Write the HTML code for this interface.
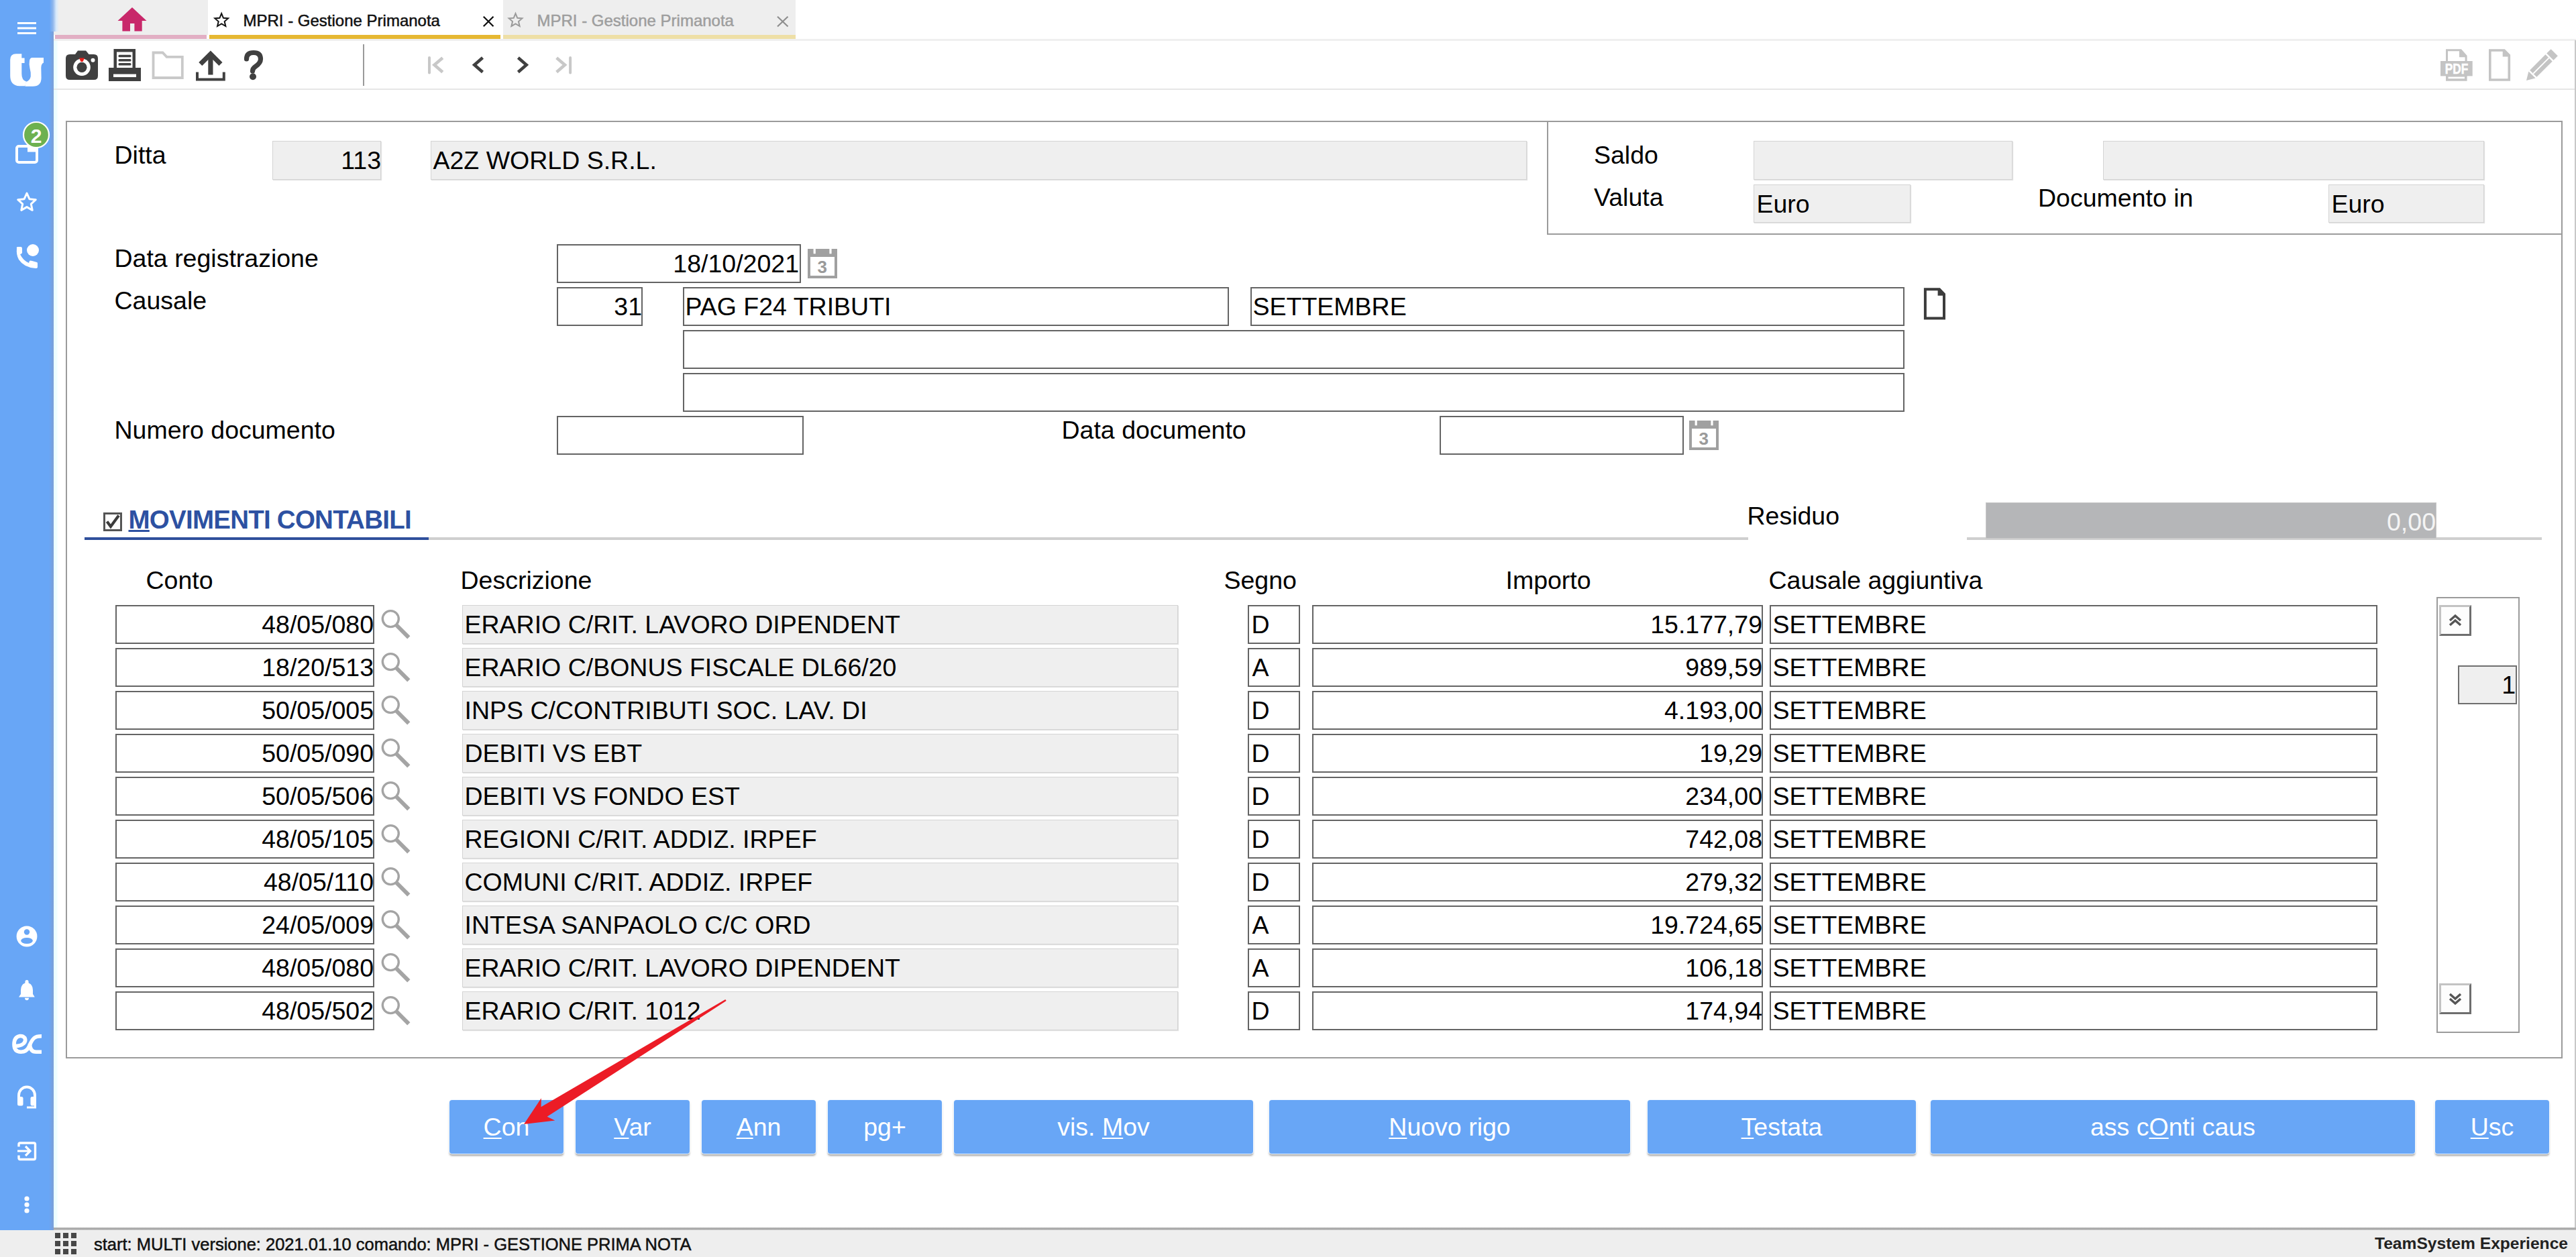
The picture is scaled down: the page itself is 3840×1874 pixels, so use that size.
<!DOCTYPE html>
<html><head><meta charset="utf-8"><style>
html,body{margin:0;padding:0;background:#fff;width:3840px;height:1874px;overflow:hidden;position:relative;font-family:"Liberation Sans",sans-serif;}
.t{position:absolute;white-space:nowrap;}
.b{position:absolute;box-sizing:border-box;}
.btn{position:absolute;top:1640px;height:80px;background:#68a6f6;border-radius:4px;box-shadow:0 0 0 1px #f2f9ff,0 3px 3px rgba(0,0,0,.38);color:#fff;font-size:37.5px;line-height:80px;text-align:center;box-sizing:border-box;}
.btn u{text-decoration-thickness:2px;text-underline-offset:2.5px;}
svg{display:block}
</style></head><body>
<div class="b" style="left:0px;top:0px;width:80px;height:1834px;background:#68a6f6;"></div>
<div class="b" style="left:73px;top:0px;width:7px;height:1834px;background:linear-gradient(90deg,#68a6f6,#7c9fd6);"></div>
<div class="b" style="left:80px;top:61px;width:7px;height:1769px;background:linear-gradient(90deg,#e8fdff,#effdff 60%,#fff);"></div>
<div class="b" style="left:80px;top:0px;width:230px;height:52px;background:#eeeeee;"></div>
<div class="b" style="left:82px;top:52px;width:226px;height:6px;background:#e2afc4;"></div>
<div class="b" style="left:312px;top:52px;width:434px;height:6px;background:#e6b832;"></div>
<div class="b" style="left:750px;top:0px;width:436px;height:52px;background:#eeeeee;"></div>
<div class="b" style="left:750px;top:52px;width:436px;height:6px;background:#eedfa6;"></div>
<div class="b" style="left:80px;top:58px;width:3760px;height:3px;background:#efefef;"></div>
<div class="b" style="left:74px;top:0px;width:14px;height:47px;background:linear-gradient(90deg,#68a6f6,#8fb6ec 35%,#d8eafc 70%,rgba(238,238,238,0));"></div>
<div class="b" style="left:80px;top:132px;width:3758px;height:2px;background:#e6e6e6;"></div>
<div class="b" style="left:541px;top:66px;width:2px;height:62px;background:#9a9a9a;"></div>
<div class="b" style="left:3838px;top:60px;width:2px;height:1770px;background:#c8c8c8;"></div>
<div class="b" style="left:0px;top:1834px;width:3840px;height:40px;background:#eeeeee;"></div>
<div class="b" style="left:80px;top:1830px;width:3760px;height:4px;background:linear-gradient(#b8b8b8,#a4a4a4 60%,#d8d8d8);"></div>
<div class="b" style="left:98px;top:180px;width:3722px;height:1398px;border:2px solid #9b9b9b;"></div>
<div class="b" style="left:2306px;top:181px;width:1513px;height:169px;border-left:2px solid #9b9b9b;border-bottom:2px solid #9b9b9b;"></div>
<div class="t" style="left:170.5px;top:209.51px;font-size:37.5px;line-height:43px;color:#000;font-weight:normal;">Ditta</div>
<div class="b" style="left:406px;top:210px;width:162px;height:58px;background:#efefef;border:1px solid #d4d4d4;box-shadow:1px 1px 1px #e2e2e2;"></div>
<div class="t" style="right:3272px;top:217.51px;font-size:37.5px;line-height:43px;color:#000;font-weight:normal;">113</div>
<div class="b" style="left:642px;top:210px;width:1634px;height:58px;background:#efefef;border:1px solid #d4d4d4;box-shadow:1px 1px 1px #e2e2e2;"></div>
<div class="t" style="left:645.5px;top:217.51px;font-size:37.5px;line-height:43px;color:#000;font-weight:normal;">A2Z WORLD S.R.L.</div>
<div class="t" style="left:2376.0px;top:209.51px;font-size:37.5px;line-height:43px;color:#000;font-weight:normal;">Saldo</div>
<div class="t" style="left:2376.0px;top:272.51px;font-size:37.5px;line-height:43px;color:#000;font-weight:normal;">Valuta</div>
<div class="b" style="left:2614px;top:210px;width:386px;height:58px;background:#efefef;border:1px solid #d4d4d4;box-shadow:1px 1px 1px #e2e2e2;"></div>
<div class="b" style="left:3135px;top:210px;width:568px;height:58px;background:#efefef;border:1px solid #d4d4d4;box-shadow:1px 1px 1px #e2e2e2;"></div>
<div class="b" style="left:2614px;top:275px;width:234px;height:57px;background:#efefef;border:1px solid #d4d4d4;box-shadow:1px 1px 1px #e2e2e2;"></div>
<div class="t" style="left:2618.5px;top:282.51px;font-size:37.5px;line-height:43px;color:#000;font-weight:normal;">Euro</div>
<div class="t" style="left:3038.0px;top:273.51px;font-size:37.5px;line-height:43px;color:#000;font-weight:normal;">Documento in</div>
<div class="b" style="left:3471px;top:275px;width:232px;height:57px;background:#efefef;border:1px solid #d4d4d4;box-shadow:1px 1px 1px #e2e2e2;"></div>
<div class="t" style="left:3475.5px;top:282.51px;font-size:37.5px;line-height:43px;color:#000;font-weight:normal;">Euro</div>
<div class="t" style="left:170.5px;top:363.51px;font-size:37.5px;line-height:43px;color:#000;font-weight:normal;">Data registrazione</div>
<div class="b" style="left:830px;top:364px;width:364px;height:58px;background:#fff;border:2px solid #646464;"></div>
<div class="t" style="right:2649px;top:371.51px;font-size:37.5px;line-height:43px;color:#000;font-weight:normal;">18/10/2021</div>
<div class="t" style="left:170.5px;top:426.51px;font-size:37.5px;line-height:43px;color:#000;font-weight:normal;">Causale</div>
<div class="b" style="left:830px;top:428px;width:128px;height:58px;background:#fff;border:2px solid #646464;"></div>
<div class="t" style="right:2883px;top:435.51px;font-size:37.5px;line-height:43px;color:#000;font-weight:normal;">31</div>
<div class="b" style="left:1018px;top:428px;width:814px;height:58px;background:#fff;border:2px solid #646464;"></div>
<div class="t" style="left:1021.5px;top:435.51px;font-size:37.5px;line-height:43px;color:#000;font-weight:normal;">PAG F24 TRIBUTI</div>
<div class="b" style="left:1864px;top:428px;width:975px;height:58px;background:#fff;border:2px solid #646464;"></div>
<div class="t" style="left:1867.5px;top:435.51px;font-size:37.5px;line-height:43px;color:#000;font-weight:normal;">SETTEMBRE</div>
<div class="b" style="left:1018px;top:492px;width:1821px;height:58px;background:#fff;border:2px solid #646464;"></div>
<div class="b" style="left:1018px;top:556px;width:1821px;height:58px;background:#fff;border:2px solid #646464;"></div>
<div class="t" style="left:170.5px;top:619.51px;font-size:37.5px;line-height:43px;color:#000;font-weight:normal;">Numero documento</div>
<div class="b" style="left:830px;top:620px;width:368px;height:58px;background:#fff;border:2px solid #646464;"></div>
<div class="t" style="left:1582.5px;top:619.51px;font-size:37.5px;line-height:43px;color:#000;font-weight:normal;">Data documento</div>
<div class="b" style="left:2146px;top:620px;width:364px;height:58px;background:#fff;border:2px solid #646464;"></div>
<div class="b" style="left:126px;top:801px;width:2480px;height:4px;background:#cfcfcf;"></div>
<div class="b" style="left:2932px;top:801px;width:857px;height:4px;background:#cfcfcf;"></div>
<div class="b" style="left:126px;top:801px;width:513px;height:4px;background:#2f4f9c;"></div>
<div class="t" style="left:191.5px;top:752.66px;font-size:38.5px;line-height:44px;color:#2d51a2;font-weight:bold;letter-spacing:-0.75px"><u style="text-decoration-thickness:2.5px;text-underline-offset:2px">M</u>OVIMENTI CONTABILI</div>
<div class="t" style="left:2604.5px;top:747.51px;font-size:37.5px;line-height:43px;color:#000;font-weight:normal;">Residuo</div>
<div class="b" style="left:2960px;top:749px;width:672px;height:54px;background:#b5b6b8;border:1px solid #c8c8c8;"></div>
<div class="t" style="right:209px;top:756.51px;font-size:37.5px;line-height:43px;color:#f4f4f4;font-weight:normal;">0,00</div>
<div class="t" style="left:217.5px;top:843.51px;font-size:37.5px;line-height:43px;color:#000;font-weight:normal;">Conto</div>
<div class="t" style="left:686.5px;top:843.51px;font-size:37.5px;line-height:43px;color:#000;font-weight:normal;">Descrizione</div>
<div class="t" style="left:1824.5px;top:843.51px;font-size:37.5px;line-height:43px;color:#000;font-weight:normal;">Segno</div>
<div class="t" style="left:2244.5px;top:843.51px;font-size:37.5px;line-height:43px;color:#000;font-weight:normal;">Importo</div>
<div class="t" style="left:2636.5px;top:843.51px;font-size:37.5px;line-height:43px;color:#000;font-weight:normal;">Causale aggiuntiva</div>
<div class="b" style="left:172px;top:902px;width:386px;height:58px;background:#fff;border:2px solid #646464;"></div>
<div class="t" style="right:3283px;top:909.51px;font-size:37.5px;line-height:43px;color:#000;font-weight:normal;">48/05/080</div>
<div class="b" style="left:567px;top:908px"><svg width="46" height="46" viewBox="0 0 46 46"><circle cx="15.3" cy="14.6" r="12" fill="none" stroke="#a4a4a4" stroke-width="3.4"/><line x1="23" y1="23" x2="42.3" y2="42.3" stroke="#a4a4a4" stroke-width="6"/></svg></div>
<div class="b" style="left:689px;top:902px;width:1067px;height:58px;background:#efefef;border:1px solid #d4d4d4;box-shadow:1px 1px 1px #e2e2e2;"></div>
<div class="t" style="left:692.5px;top:909.51px;font-size:37.5px;line-height:43px;color:#000;font-weight:normal;">ERARIO C/RIT. LAVORO DIPENDENT</div>
<div class="b" style="left:1860px;top:902px;width:78px;height:58px;background:#fff;border:2px solid #646464;"></div>
<div class="t" style="left:1865.5px;top:909.51px;font-size:37.5px;line-height:43px;color:#000;font-weight:normal;">D</div>
<div class="b" style="left:1956px;top:902px;width:672px;height:58px;background:#fff;border:2px solid #646464;"></div>
<div class="t" style="right:1213px;top:909.51px;font-size:37.5px;line-height:43px;color:#000;font-weight:normal;">15.177,79</div>
<div class="b" style="left:2638px;top:902px;width:906px;height:58px;background:#fff;border:2px solid #646464;"></div>
<div class="t" style="left:2642.5px;top:909.51px;font-size:37.5px;line-height:43px;color:#000;font-weight:normal;">SETTEMBRE</div>
<div class="b" style="left:172px;top:966px;width:386px;height:58px;background:#fff;border:2px solid #646464;"></div>
<div class="t" style="right:3283px;top:973.51px;font-size:37.5px;line-height:43px;color:#000;font-weight:normal;">18/20/513</div>
<div class="b" style="left:567px;top:972px"><svg width="46" height="46" viewBox="0 0 46 46"><circle cx="15.3" cy="14.6" r="12" fill="none" stroke="#a4a4a4" stroke-width="3.4"/><line x1="23" y1="23" x2="42.3" y2="42.3" stroke="#a4a4a4" stroke-width="6"/></svg></div>
<div class="b" style="left:689px;top:966px;width:1067px;height:58px;background:#efefef;border:1px solid #d4d4d4;box-shadow:1px 1px 1px #e2e2e2;"></div>
<div class="t" style="left:692.5px;top:973.51px;font-size:37.5px;line-height:43px;color:#000;font-weight:normal;">ERARIO C/BONUS FISCALE DL66/20</div>
<div class="b" style="left:1860px;top:966px;width:78px;height:58px;background:#fff;border:2px solid #646464;"></div>
<div class="t" style="left:1866.5px;top:973.51px;font-size:37.5px;line-height:43px;color:#000;font-weight:normal;">A</div>
<div class="b" style="left:1956px;top:966px;width:672px;height:58px;background:#fff;border:2px solid #646464;"></div>
<div class="t" style="right:1213px;top:973.51px;font-size:37.5px;line-height:43px;color:#000;font-weight:normal;">989,59</div>
<div class="b" style="left:2638px;top:966px;width:906px;height:58px;background:#fff;border:2px solid #646464;"></div>
<div class="t" style="left:2642.5px;top:973.51px;font-size:37.5px;line-height:43px;color:#000;font-weight:normal;">SETTEMBRE</div>
<div class="b" style="left:172px;top:1030px;width:386px;height:58px;background:#fff;border:2px solid #646464;"></div>
<div class="t" style="right:3283px;top:1037.51px;font-size:37.5px;line-height:43px;color:#000;font-weight:normal;">50/05/005</div>
<div class="b" style="left:567px;top:1036px"><svg width="46" height="46" viewBox="0 0 46 46"><circle cx="15.3" cy="14.6" r="12" fill="none" stroke="#a4a4a4" stroke-width="3.4"/><line x1="23" y1="23" x2="42.3" y2="42.3" stroke="#a4a4a4" stroke-width="6"/></svg></div>
<div class="b" style="left:689px;top:1030px;width:1067px;height:58px;background:#efefef;border:1px solid #d4d4d4;box-shadow:1px 1px 1px #e2e2e2;"></div>
<div class="t" style="left:692.5px;top:1037.51px;font-size:37.5px;line-height:43px;color:#000;font-weight:normal;">INPS C/CONTRIBUTI SOC. LAV. DI</div>
<div class="b" style="left:1860px;top:1030px;width:78px;height:58px;background:#fff;border:2px solid #646464;"></div>
<div class="t" style="left:1865.5px;top:1037.51px;font-size:37.5px;line-height:43px;color:#000;font-weight:normal;">D</div>
<div class="b" style="left:1956px;top:1030px;width:672px;height:58px;background:#fff;border:2px solid #646464;"></div>
<div class="t" style="right:1213px;top:1037.51px;font-size:37.5px;line-height:43px;color:#000;font-weight:normal;">4.193,00</div>
<div class="b" style="left:2638px;top:1030px;width:906px;height:58px;background:#fff;border:2px solid #646464;"></div>
<div class="t" style="left:2642.5px;top:1037.51px;font-size:37.5px;line-height:43px;color:#000;font-weight:normal;">SETTEMBRE</div>
<div class="b" style="left:172px;top:1094px;width:386px;height:58px;background:#fff;border:2px solid #646464;"></div>
<div class="t" style="right:3283px;top:1101.51px;font-size:37.5px;line-height:43px;color:#000;font-weight:normal;">50/05/090</div>
<div class="b" style="left:567px;top:1100px"><svg width="46" height="46" viewBox="0 0 46 46"><circle cx="15.3" cy="14.6" r="12" fill="none" stroke="#a4a4a4" stroke-width="3.4"/><line x1="23" y1="23" x2="42.3" y2="42.3" stroke="#a4a4a4" stroke-width="6"/></svg></div>
<div class="b" style="left:689px;top:1094px;width:1067px;height:58px;background:#efefef;border:1px solid #d4d4d4;box-shadow:1px 1px 1px #e2e2e2;"></div>
<div class="t" style="left:692.5px;top:1101.51px;font-size:37.5px;line-height:43px;color:#000;font-weight:normal;">DEBITI VS EBT</div>
<div class="b" style="left:1860px;top:1094px;width:78px;height:58px;background:#fff;border:2px solid #646464;"></div>
<div class="t" style="left:1865.5px;top:1101.51px;font-size:37.5px;line-height:43px;color:#000;font-weight:normal;">D</div>
<div class="b" style="left:1956px;top:1094px;width:672px;height:58px;background:#fff;border:2px solid #646464;"></div>
<div class="t" style="right:1213px;top:1101.51px;font-size:37.5px;line-height:43px;color:#000;font-weight:normal;">19,29</div>
<div class="b" style="left:2638px;top:1094px;width:906px;height:58px;background:#fff;border:2px solid #646464;"></div>
<div class="t" style="left:2642.5px;top:1101.51px;font-size:37.5px;line-height:43px;color:#000;font-weight:normal;">SETTEMBRE</div>
<div class="b" style="left:172px;top:1158px;width:386px;height:58px;background:#fff;border:2px solid #646464;"></div>
<div class="t" style="right:3283px;top:1165.51px;font-size:37.5px;line-height:43px;color:#000;font-weight:normal;">50/05/506</div>
<div class="b" style="left:567px;top:1164px"><svg width="46" height="46" viewBox="0 0 46 46"><circle cx="15.3" cy="14.6" r="12" fill="none" stroke="#a4a4a4" stroke-width="3.4"/><line x1="23" y1="23" x2="42.3" y2="42.3" stroke="#a4a4a4" stroke-width="6"/></svg></div>
<div class="b" style="left:689px;top:1158px;width:1067px;height:58px;background:#efefef;border:1px solid #d4d4d4;box-shadow:1px 1px 1px #e2e2e2;"></div>
<div class="t" style="left:692.5px;top:1165.51px;font-size:37.5px;line-height:43px;color:#000;font-weight:normal;">DEBITI VS FONDO EST</div>
<div class="b" style="left:1860px;top:1158px;width:78px;height:58px;background:#fff;border:2px solid #646464;"></div>
<div class="t" style="left:1865.5px;top:1165.51px;font-size:37.5px;line-height:43px;color:#000;font-weight:normal;">D</div>
<div class="b" style="left:1956px;top:1158px;width:672px;height:58px;background:#fff;border:2px solid #646464;"></div>
<div class="t" style="right:1213px;top:1165.51px;font-size:37.5px;line-height:43px;color:#000;font-weight:normal;">234,00</div>
<div class="b" style="left:2638px;top:1158px;width:906px;height:58px;background:#fff;border:2px solid #646464;"></div>
<div class="t" style="left:2642.5px;top:1165.51px;font-size:37.5px;line-height:43px;color:#000;font-weight:normal;">SETTEMBRE</div>
<div class="b" style="left:172px;top:1222px;width:386px;height:58px;background:#fff;border:2px solid #646464;"></div>
<div class="t" style="right:3283px;top:1229.51px;font-size:37.5px;line-height:43px;color:#000;font-weight:normal;">48/05/105</div>
<div class="b" style="left:567px;top:1228px"><svg width="46" height="46" viewBox="0 0 46 46"><circle cx="15.3" cy="14.6" r="12" fill="none" stroke="#a4a4a4" stroke-width="3.4"/><line x1="23" y1="23" x2="42.3" y2="42.3" stroke="#a4a4a4" stroke-width="6"/></svg></div>
<div class="b" style="left:689px;top:1222px;width:1067px;height:58px;background:#efefef;border:1px solid #d4d4d4;box-shadow:1px 1px 1px #e2e2e2;"></div>
<div class="t" style="left:692.5px;top:1229.51px;font-size:37.5px;line-height:43px;color:#000;font-weight:normal;">REGIONI C/RIT. ADDIZ. IRPEF</div>
<div class="b" style="left:1860px;top:1222px;width:78px;height:58px;background:#fff;border:2px solid #646464;"></div>
<div class="t" style="left:1865.5px;top:1229.51px;font-size:37.5px;line-height:43px;color:#000;font-weight:normal;">D</div>
<div class="b" style="left:1956px;top:1222px;width:672px;height:58px;background:#fff;border:2px solid #646464;"></div>
<div class="t" style="right:1213px;top:1229.51px;font-size:37.5px;line-height:43px;color:#000;font-weight:normal;">742,08</div>
<div class="b" style="left:2638px;top:1222px;width:906px;height:58px;background:#fff;border:2px solid #646464;"></div>
<div class="t" style="left:2642.5px;top:1229.51px;font-size:37.5px;line-height:43px;color:#000;font-weight:normal;">SETTEMBRE</div>
<div class="b" style="left:172px;top:1286px;width:386px;height:58px;background:#fff;border:2px solid #646464;"></div>
<div class="t" style="right:3283px;top:1293.51px;font-size:37.5px;line-height:43px;color:#000;font-weight:normal;">48/05/110</div>
<div class="b" style="left:567px;top:1292px"><svg width="46" height="46" viewBox="0 0 46 46"><circle cx="15.3" cy="14.6" r="12" fill="none" stroke="#a4a4a4" stroke-width="3.4"/><line x1="23" y1="23" x2="42.3" y2="42.3" stroke="#a4a4a4" stroke-width="6"/></svg></div>
<div class="b" style="left:689px;top:1286px;width:1067px;height:58px;background:#efefef;border:1px solid #d4d4d4;box-shadow:1px 1px 1px #e2e2e2;"></div>
<div class="t" style="left:692.5px;top:1293.51px;font-size:37.5px;line-height:43px;color:#000;font-weight:normal;">COMUNI C/RIT. ADDIZ. IRPEF</div>
<div class="b" style="left:1860px;top:1286px;width:78px;height:58px;background:#fff;border:2px solid #646464;"></div>
<div class="t" style="left:1865.5px;top:1293.51px;font-size:37.5px;line-height:43px;color:#000;font-weight:normal;">D</div>
<div class="b" style="left:1956px;top:1286px;width:672px;height:58px;background:#fff;border:2px solid #646464;"></div>
<div class="t" style="right:1213px;top:1293.51px;font-size:37.5px;line-height:43px;color:#000;font-weight:normal;">279,32</div>
<div class="b" style="left:2638px;top:1286px;width:906px;height:58px;background:#fff;border:2px solid #646464;"></div>
<div class="t" style="left:2642.5px;top:1293.51px;font-size:37.5px;line-height:43px;color:#000;font-weight:normal;">SETTEMBRE</div>
<div class="b" style="left:172px;top:1350px;width:386px;height:58px;background:#fff;border:2px solid #646464;"></div>
<div class="t" style="right:3283px;top:1357.51px;font-size:37.5px;line-height:43px;color:#000;font-weight:normal;">24/05/009</div>
<div class="b" style="left:567px;top:1356px"><svg width="46" height="46" viewBox="0 0 46 46"><circle cx="15.3" cy="14.6" r="12" fill="none" stroke="#a4a4a4" stroke-width="3.4"/><line x1="23" y1="23" x2="42.3" y2="42.3" stroke="#a4a4a4" stroke-width="6"/></svg></div>
<div class="b" style="left:689px;top:1350px;width:1067px;height:58px;background:#efefef;border:1px solid #d4d4d4;box-shadow:1px 1px 1px #e2e2e2;"></div>
<div class="t" style="left:692.5px;top:1357.51px;font-size:37.5px;line-height:43px;color:#000;font-weight:normal;">INTESA SANPAOLO C/C ORD</div>
<div class="b" style="left:1860px;top:1350px;width:78px;height:58px;background:#fff;border:2px solid #646464;"></div>
<div class="t" style="left:1866.5px;top:1357.51px;font-size:37.5px;line-height:43px;color:#000;font-weight:normal;">A</div>
<div class="b" style="left:1956px;top:1350px;width:672px;height:58px;background:#fff;border:2px solid #646464;"></div>
<div class="t" style="right:1213px;top:1357.51px;font-size:37.5px;line-height:43px;color:#000;font-weight:normal;">19.724,65</div>
<div class="b" style="left:2638px;top:1350px;width:906px;height:58px;background:#fff;border:2px solid #646464;"></div>
<div class="t" style="left:2642.5px;top:1357.51px;font-size:37.5px;line-height:43px;color:#000;font-weight:normal;">SETTEMBRE</div>
<div class="b" style="left:172px;top:1414px;width:386px;height:58px;background:#fff;border:2px solid #646464;"></div>
<div class="t" style="right:3283px;top:1421.51px;font-size:37.5px;line-height:43px;color:#000;font-weight:normal;">48/05/080</div>
<div class="b" style="left:567px;top:1420px"><svg width="46" height="46" viewBox="0 0 46 46"><circle cx="15.3" cy="14.6" r="12" fill="none" stroke="#a4a4a4" stroke-width="3.4"/><line x1="23" y1="23" x2="42.3" y2="42.3" stroke="#a4a4a4" stroke-width="6"/></svg></div>
<div class="b" style="left:689px;top:1414px;width:1067px;height:58px;background:#efefef;border:1px solid #d4d4d4;box-shadow:1px 1px 1px #e2e2e2;"></div>
<div class="t" style="left:692.5px;top:1421.51px;font-size:37.5px;line-height:43px;color:#000;font-weight:normal;">ERARIO C/RIT. LAVORO DIPENDENT</div>
<div class="b" style="left:1860px;top:1414px;width:78px;height:58px;background:#fff;border:2px solid #646464;"></div>
<div class="t" style="left:1866.5px;top:1421.51px;font-size:37.5px;line-height:43px;color:#000;font-weight:normal;">A</div>
<div class="b" style="left:1956px;top:1414px;width:672px;height:58px;background:#fff;border:2px solid #646464;"></div>
<div class="t" style="right:1213px;top:1421.51px;font-size:37.5px;line-height:43px;color:#000;font-weight:normal;">106,18</div>
<div class="b" style="left:2638px;top:1414px;width:906px;height:58px;background:#fff;border:2px solid #646464;"></div>
<div class="t" style="left:2642.5px;top:1421.51px;font-size:37.5px;line-height:43px;color:#000;font-weight:normal;">SETTEMBRE</div>
<div class="b" style="left:172px;top:1478px;width:386px;height:58px;background:#fff;border:2px solid #646464;"></div>
<div class="t" style="right:3283px;top:1485.51px;font-size:37.5px;line-height:43px;color:#000;font-weight:normal;">48/05/502</div>
<div class="b" style="left:567px;top:1484px"><svg width="46" height="46" viewBox="0 0 46 46"><circle cx="15.3" cy="14.6" r="12" fill="none" stroke="#a4a4a4" stroke-width="3.4"/><line x1="23" y1="23" x2="42.3" y2="42.3" stroke="#a4a4a4" stroke-width="6"/></svg></div>
<div class="b" style="left:689px;top:1478px;width:1067px;height:58px;background:#efefef;border:1px solid #d4d4d4;box-shadow:1px 1px 1px #e2e2e2;"></div>
<div class="t" style="left:692.5px;top:1485.51px;font-size:37.5px;line-height:43px;color:#000;font-weight:normal;">ERARIO C/RIT. 1012</div>
<div class="b" style="left:1860px;top:1478px;width:78px;height:58px;background:#fff;border:2px solid #646464;"></div>
<div class="t" style="left:1865.5px;top:1485.51px;font-size:37.5px;line-height:43px;color:#000;font-weight:normal;">D</div>
<div class="b" style="left:1956px;top:1478px;width:672px;height:58px;background:#fff;border:2px solid #646464;"></div>
<div class="t" style="right:1213px;top:1485.51px;font-size:37.5px;line-height:43px;color:#000;font-weight:normal;">174,94</div>
<div class="b" style="left:2638px;top:1478px;width:906px;height:58px;background:#fff;border:2px solid #646464;"></div>
<div class="t" style="left:2642.5px;top:1485.51px;font-size:37.5px;line-height:43px;color:#000;font-weight:normal;">SETTEMBRE</div>
<div class="b" style="left:3632px;top:890px;width:124px;height:650px;border:2px solid #9b9b9b;"></div>
<div class="b" style="left:3636px;top:902px;width:48px;height:46px;background:#fdfdfd;border-style:solid;border-width:3px;border-color:#c3c3c3 #6e6e6e #6e6e6e #c3c3c3;"></div>
<div class="b" style="left:3636px;top:1466px;width:48px;height:46px;background:#fdfdfd;border-style:solid;border-width:3px;border-color:#c3c3c3 #6e6e6e #6e6e6e #c3c3c3;"></div>
<svg class="b" style="left:3648px;top:914px" width="24" height="22" viewBox="0 0 24 22"><path d="M4 11 L12 4 L20 11 M4 18 L12 11 L20 18" fill="none" stroke="#555" stroke-width="3.5"/></svg>
<svg class="b" style="left:3648px;top:1478px" width="24" height="22" viewBox="0 0 24 22"><path d="M4 4 L12 11 L20 4 M4 11 L12 18 L20 11" fill="none" stroke="#555" stroke-width="3.5"/></svg>
<div class="b" style="left:3664px;top:992px;width:88px;height:58px;background:#efefef;border:2px solid #6f6f6f;"></div>
<div class="t" style="right:90px;top:999.51px;font-size:37.5px;line-height:43px;color:#000;font-weight:normal;">1</div>
<div class="btn" style="left:670px;width:170px"><u>C</u>on</div>
<div class="btn" style="left:858px;width:170px"><u>V</u>ar</div>
<div class="btn" style="left:1046px;width:170px"><u>A</u>nn</div>
<div class="btn" style="left:1234px;width:170px">pg+</div>
<div class="btn" style="left:1422px;width:446px">vis. <u>M</u>ov</div>
<div class="btn" style="left:1892px;width:538px"><u>N</u>uovo rigo</div>
<div class="btn" style="left:2456px;width:400px"><u>T</u>estata</div>
<div class="btn" style="left:2878px;width:722px">ass c<u>O</u>nti caus</div>
<div class="btn" style="left:3630px;width:170px"><u>U</u>sc</div>
<div class="t" style="left:140px;top:1840.66px;font-size:25.5px;line-height:29px;color:#111;font-weight:normal;-webkit-text-stroke:0.5px #111">start: MULTI versione: 2021.01.10 comando: MPRI - GESTIONE PRIMA NOTA</div>
<div class="t" style="right:12px;top:1840.48px;font-size:24.6px;line-height:28px;color:#222;font-weight:bold;">TeamSystem Experience</div>
<div class="t" style="left:362.5px;top:17.18px;font-size:24px;line-height:28px;color:#111;font-weight:normal;-webkit-text-stroke:0.5px #111">MPRI - Gestione Primanota</div>
<div class="t" style="left:800.5px;top:17.18px;font-size:24px;line-height:28px;color:#9e9e9e;font-weight:normal;-webkit-text-stroke:0.5px #9e9e9e">MPRI - Gestione Primanota</div>
<svg style="position:absolute;left:0;top:0" width="3840" height="1874" viewBox="0 0 3840 1874"><rect x="26" y="33" width="28" height="3" fill="#ffffff"/><rect x="26" y="40.5" width="28" height="3" fill="#ffffff"/><rect x="26" y="48" width="28" height="3" fill="#ffffff"/><path d="M15.2 89 Q15.2 80.2 24 80.2 L32.3 80.2 L32.3 86.4 L36.6 86.4 L36.6 94 L32.3 94 L32.3 110 Q32.3 119.5 39 121.5 L37.5 128.3 L29 128.3 Q15.2 127.5 15.2 113 Z" fill="#ffffff"/><path d="M48 86 L65 86 L65 93.5 Q61.3 95 61.3 101 L61.6 116 Q61.6 128.6 49 128.8 L37.5 128.8 L38.5 122 Q44.5 120.5 45.8 114 Q46.3 108 44.5 102 Q43 96 44 90 Q45 86 48 86 Z" fill="#ffffff"/><rect x="25" y="218" width="30" height="24" rx="3" fill="none" stroke="#ffffff" stroke-width="4"/><rect x="41" y="217" width="14" height="9.5" fill="#ffffff"/><circle cx="54" cy="201" r="19" fill="#6db150" stroke="#ffffff" stroke-width="2.2"/><text x="54" y="212.5" text-anchor="middle" font-family="Liberation Sans" font-weight="bold" font-size="30" fill="#ffffff">2</text><path d="M40.00,288.00 L43.88,296.66 L53.31,297.67 L46.28,304.04 L48.23,313.33 L40.00,308.60 L31.77,313.33 L33.72,304.04 L26.69,297.67 L36.12,296.66 Z" fill="none" stroke="#ffffff" stroke-width="3" stroke-linejoin="round"/><circle cx="49" cy="373" r="9" fill="#ffffff"/><path d="M25 370 Q24 368 27 368 L31 368 Q33 368 33 371 L33 377 Q32 379 30 379 Q34 388 43 392 L44 389 Q45 388 48 389 L55 391 Q56 391 56 393 L56 398 Q56 400 53 400 Q36 399 28 387 Q24 380 25 370 Z" fill="#ffffff"/><circle cx="40" cy="1396" r="15.4" fill="#ffffff"/><circle cx="40" cy="1389.5" r="4.2" fill="#68a6f6"/><ellipse cx="40" cy="1402.5" rx="8.8" ry="4.6" fill="#68a6f6"/><path d="M40 1461 Q42.6 1461 42.6 1464 L42.6 1465.5 Q49 1468 49 1476 L49 1482 L51.8 1486.5 L28 1486.5 L31 1482 L31 1476 Q31 1468 37.4 1465.5 L37.4 1464 Q37.4 1461 40 1461 Z" fill="#ffffff"/><path d="M37 1487.8 L43 1487.8 Q43 1491.2 40 1491.2 Q37 1491.2 37 1487.8 Z" fill="#ffffff"/><path d="M22.5 1559.5 Q31 1559.5 35.5 1555.5 Q39 1551.5 37 1547.5 Q34.5 1544 29.5 1544.5 Q21 1546 21 1557 Q21 1568 31 1568.3 Q39.5 1568.5 43.5 1560 Q47 1551 51 1547.5 Q54 1544.8 62 1544.8" fill="none" stroke="#ffffff" stroke-width="5.6"/><path d="M44.5 1556 Q44.5 1568.3 54 1568.3 L62 1568.3" fill="none" stroke="#ffffff" stroke-width="5.6"/><path d="M28 1646 L28 1633 A12 12.5 0 0 1 52 1633 L52 1646" fill="none" stroke="#ffffff" stroke-width="4"/><rect x="26" y="1635" width="8.5" height="13.5" rx="2.5" fill="#ffffff"/><rect x="45.5" y="1635" width="8.5" height="13.5" rx="2.5" fill="#ffffff"/><path d="M52.5 1647 L52.5 1651 L40 1651" fill="none" stroke="#ffffff" stroke-width="3"/><path d="M28 1709.5 L28 1706 Q28 1704 30 1704 L50.5 1704 Q52.5 1704 52.5 1706 L52.5 1726.5 Q52.5 1728.5 50.5 1728.5 L30 1728.5 Q28 1728.5 28 1726.5 L28 1722.5" fill="none" stroke="#ffffff" stroke-width="3.4"/><path d="M26 1716 L45 1716 M38 1709 L45 1716 L38 1723" fill="none" stroke="#ffffff" stroke-width="3.2"/><circle cx="40" cy="1787" r="3.6" fill="#ffffff"/><circle cx="40" cy="1796" r="3.6" fill="#ffffff"/><circle cx="40" cy="1805" r="3.6" fill="#ffffff"/><path d="M197 11 L175.5 31 L182.4 31 L182.4 46.5 L194 46.5 L194 35 L200.4 35 L200.4 46.5 L211.7 46.5 L211.7 31 L218.5 31 Z" fill="#c8286a"/><path d="M330.20,20.20 L332.96,26.80 L340.09,27.39 L334.67,32.05 L336.31,39.01 L330.20,35.30 L324.09,39.01 L325.73,32.05 L320.31,27.39 L327.44,26.80 Z" fill="none" stroke="#111" stroke-width="2"/><path d="M768.50,20.20 L771.26,26.80 L778.39,27.39 L772.97,32.05 L774.61,39.01 L768.50,35.30 L762.39,39.01 L764.03,32.05 L758.61,27.39 L765.74,26.80 Z" fill="none" stroke="#9a9a9a" stroke-width="2"/><path d="M720.8 24.8 L735.5 39.2 M735.5 24.8 L720.8 39.2" stroke="#111" stroke-width="2.3"/><path d="M1159 24.8 L1174.5 39.5 M1174.5 24.8 L1159 39.5" stroke="#8e8e8e" stroke-width="2.2"/><path d="M104 81 L112 81 L116 75.5 L128 75.5 L132.5 81 L140 81 Q146 81 146 87 L146 113 Q146 119 140 119 L104 119 Q98 119 98 113 L98 87 Q98 81 104 81 Z" fill="#404040"/><circle cx="122" cy="100.3" r="12.8" fill="#fff"/><circle cx="122" cy="100.3" r="7.6" fill="#404040"/><circle cx="138.5" cy="89.7" r="3" fill="#fff"/><path d="M118 86.5 L126 86.5 L123.5 92 L120.5 92 Z" fill="#e8201c"/><path d="M169.5 73 L202 73 L202 102 L197.5 102 L197.5 77.5 L174 77.5 L174 102 L169.5 102 Z" fill="#404040"/><rect x="176.5" y="81.8" width="19" height="3.5" rx="1.5" fill="#404040"/><rect x="176.5" y="88" width="19" height="3.5" rx="1.5" fill="#404040"/><rect x="176.5" y="94" width="19" height="3.5" rx="1.5" fill="#404040"/><path d="M162 101 L210 101 L210 121 L162 121 Z M169 110.4 L169 115 L203 115 L203 110.4 Z" fill="#404040" fill-rule="evenodd"/><path d="M228.5 78.5 L242.5 78.5 L248.5 84.8 L271.8 84.8 L271.8 116 L228.5 116 Z" fill="none" stroke="#c9c9c9" stroke-width="3.8"/><path d="M313.9 80 L313.9 111.5" fill="none" stroke="#404040" stroke-width="7.2"/><path d="M298.8 95.5 L313.9 80.5 L329 95.5" fill="none" stroke="#404040" stroke-width="7.2" stroke-linejoin="miter" stroke-miterlimit="10"/><path d="M294 107.4 L294 118.6 L333.8 118.6 L333.8 107.4" fill="none" stroke="#404040" stroke-width="4"/><path d="M367.5 88 Q367.5 78.5 378 78.5 Q388.5 78.5 388.5 88 Q388.5 94 381 99 Q376.5 102 376.5 106" fill="none" stroke="#404040" stroke-width="7.2" stroke-linecap="round"/><circle cx="377" cy="114.2" r="5" fill="#404040"/><path d="M640 86 L640 108.5" stroke="#c8c8c8" stroke-width="4" stroke-linecap="round"/><path d="M659.8 86.2 L647.5 96.8 L659.8 107.5" fill="none" stroke="#c8c8c8" stroke-width="4.6"/><path d="M719.5 86 L707.2 96.8 L719.5 107.5" fill="none" stroke="#404040" stroke-width="4.6"/><path d="M772.4 86 L784.7 96.8 L772.4 107.5" fill="none" stroke="#404040" stroke-width="4.6"/><path d="M829.7 86.2 L842 96.8 L829.7 107.5" fill="none" stroke="#c8c8c8" stroke-width="4.6"/><path d="M850.1 86 L850.1 108.5" stroke="#c8c8c8" stroke-width="4" stroke-linecap="round"/><path d="M647.5 0" /><path d="M3647.5 91 L3647.5 74.8 L3668.3 74.8 L3676.1 83.5 L3676.1 91" fill="none" stroke="#c4c4c4" stroke-width="3"/><path d="M3666 74 L3666 85.3 L3677 85.3 L3677 83 L3669 74 Z" fill="#c4c4c4"/><rect x="3638" y="91" width="47.7" height="22.4" fill="#c4c4c4"/><text x="3662" y="110.3" text-anchor="middle" font-family="Liberation Sans" font-weight="bold" font-size="21.5" fill="#fff" stroke="#fff" stroke-width="0.6" transform="translate(3662 0) scale(0.8 1) translate(-3662 0)">PDF</text><path d="M3646 113 L3646 120.7 L3677.6 120.7 L3677.6 113 Z M3649.5 114.5 L3649.5 117.2 L3674 117.2 L3674 114.5 Z" fill="#c4c4c4" fill-rule="evenodd"/><path d="M3711.8 75 L3733 75 L3740.3 82.5 L3740.3 119 L3711.8 119 Z" fill="none" stroke="#c4c4c4" stroke-width="3.6"/><path d="M3730.7 74 L3730.7 84.6 L3742 84.6 L3742 82 L3733.5 74 Z" fill="#c4c4c4"/><g transform="translate(3766 120) rotate(-45)"><path d="M0 0 L12 -7.2 L12 7.2 Z" fill="#c4c4c4"/><rect x="14.5" y="-7.2" width="33" height="14.4" fill="#c4c4c4"/><rect x="14.5" y="-0.9" width="33" height="1.8" fill="#fff"/><rect x="50" y="-7.2" width="9" height="14.4" fill="#c4c4c4"/></g><path d="M1204 371 L1248 371 L1248 415 L1204 415 Z M1208 383 L1208 411 L1244 411 L1244 383 Z" fill="#a0a0a0" fill-rule="evenodd"/><rect x="1212.6" y="371" width="3.2" height="7.3" fill="#fff"/><rect x="1236.4" y="371" width="3.2" height="7.3" fill="#fff"/><text x="1225.8" y="406.5" text-anchor="middle" font-family="Liberation Sans" font-weight="bold" font-size="26" fill="#9a9a9a">3</text><path d="M2518 627 L2562 627 L2562 671 L2518 671 Z M2522 639 L2522 667 L2558 667 L2558 639 Z" fill="#a0a0a0" fill-rule="evenodd"/><rect x="2526.6" y="627" width="3.2" height="7.3" fill="#fff"/><rect x="2550.4" y="627" width="3.2" height="7.3" fill="#fff"/><text x="2539.8" y="662.5" text-anchor="middle" font-family="Liberation Sans" font-weight="bold" font-size="26" fill="#9a9a9a">3</text><path d="M2869.9 431.3 L2891 431.3 L2898 438.8 L2898 474.6 L2869.9 474.6 Z" fill="none" stroke="#3c3c3c" stroke-width="4"/><path d="M2888.6 430 L2888.6 440.7 L2900 440.7 L2900 438 L2891.5 430 Z" fill="#3c3c3c"/><rect x="155.5" y="765.5" width="25" height="25" fill="none" stroke="#555" stroke-width="3"/><path d="M159.5 777.5 L165 785 L177 768.5" fill="none" stroke="#3c3c3c" stroke-width="4.2"/><rect x="82" y="1838" width="8" height="8" fill="#474747"/><rect x="94" y="1838" width="8" height="8" fill="#474747"/><rect x="106" y="1838" width="8" height="8" fill="#474747"/><rect x="82" y="1850" width="8" height="8" fill="#474747"/><rect x="94" y="1850" width="8" height="8" fill="#474747"/><rect x="106" y="1850" width="8" height="8" fill="#474747"/><rect x="82" y="1862" width="8" height="8" fill="#474747"/><rect x="94" y="1862" width="8" height="8" fill="#474747"/><rect x="106" y="1862" width="8" height="8" fill="#474747"/><polygon points="1082.7,1492.1 815.6,1664.8 827.3,1670.5 781.0,1676.0 806.8,1637.2 806.6,1650.2 1081.3,1489.9" fill="#ec1c26"/></svg>
</body></html>
